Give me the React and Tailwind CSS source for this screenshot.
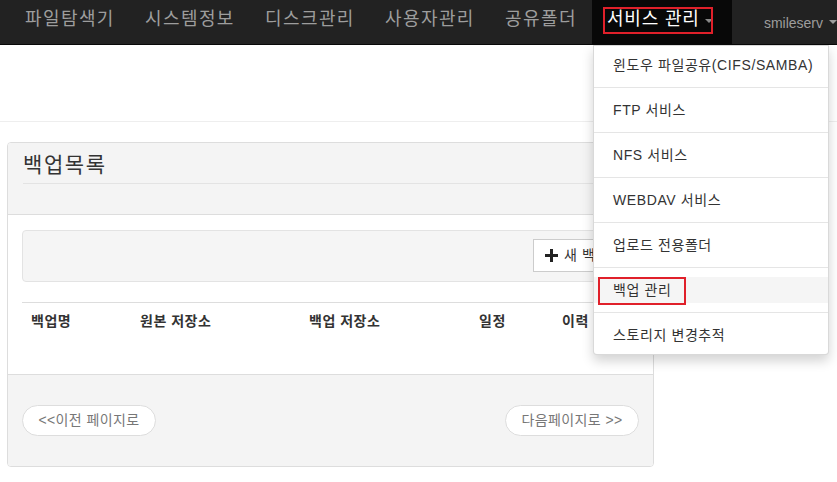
const font = { fontFamily: '"Liberation Sans", "Noto Sans CJK KR", sans-serif' };

const navItems = [
  { label: "파일탐색기", w: "w-[120px]" },
  { label: "시스템정보", w: "w-[120px]" },
  { label: "디스크관리", w: "w-[120px]" },
  { label: "사용자관리", w: "w-[120px]" },
  { label: "공유폴더", w: "w-[103px]" },
];

const menuItems = [
  "윈도우 파일공유(CIFS/SAMBA)",
  "FTP 서비스",
  "NFS 서비스",
  "WEBDAV 서비스",
  "업로드 전용폴더",
  "백업 관리",
  "스토리지 변경추적",
];

function Caret({ className }) {
  return <span className={"inline-block w-0 h-0 border-t-[4px] border-x-[4px] border-x-transparent " + className} />;
}

function Dropdown() {
  return (
    <div className="absolute top-[45px] left-[1px] w-[236px] bg-white border border-black/15 rounded-b shadow-[0_6px_12px_rgba(0,0,0,0.175)] z-20">
      {menuItems.map((item, i) => (
        <div key={item}>
          {i > 0 && <div className="h-px bg-[#e5e5e5]" />}
          <div className={i === 0 ? "pt-[6px] pb-[9px]" : i === menuItems.length - 1 ? "pt-[9px] pb-[6px]" : "py-[9px]"}>
            <div className={"relative h-[26px] flex items-center pl-[19px] text-[14px] tracking-[0.6px] text-[#333] " + (item === "백업 관리" ? "bg-[#f5f5f5]" : "")}>
              {item}
              {item === "백업 관리" && (
                <span className="absolute left-[4px] top-0 w-[88px] h-[28px] border-2 border-[#e0202a]" />
              )}
            </div>
          </div>
        </div>
      ))}
    </div>
  );
}

export default function App() {
  return (
    <div className="w-[837px] h-[482px] bg-white overflow-hidden" style={font}>
      <nav className="h-[45px] bg-[#222] border-b border-[#080808] flex pl-[9px]">
        {navItems.map((n) => (
          <div key={n.label} className={"h-[44px] pl-4 pt-[7px] text-[18px] tracking-[1.4px] leading-[24px] text-[#9d9d9d] whitespace-nowrap " + n.w}>
            {n.label}
          </div>
        ))}
        <div className="relative h-[44px] w-[140px] bg-[#080808] pl-[15px] pt-[7px] flex items-start">
          <span className="text-[18px] tracking-[0.8px] leading-[24px] text-white whitespace-nowrap">서비스 관리</span>
          <Caret className="border-t-[#888] ml-[5px] mt-[12px] border-t-[3px] border-x-[3px]" />
          <span className="absolute left-[11px] top-[7px] w-[110px] h-[27px] border-2 border-[#e0202a]" />
          <Dropdown />
        </div>
        <div className="flex-1" />
        <div className="h-[44px] flex items-center pl-[15px] text-[14px] text-[#9d9d9d]">
          <span className="leading-[20px] pt-[1px]">smileserv</span>
          <Caret className="border-t-[#9d9d9d] ml-[6px]" />
        </div>
      </nav>

      <div className="h-[77px] border-b border-[#eee]" />

      <div className="mt-[20px] ml-[7px] w-[647px] border border-[#ddd] rounded overflow-hidden">
        <div className="bg-[#f4f4f4] px-[15px] pt-[7px] pb-[30px] border-b border-[#ddd]">
          <h3 className="text-[21px] tracking-[1.6px] leading-[30px] text-[#333] pb-[3px] border-b border-[#e3e3e3]">백업목록</h3>
        </div>

        <div className="bg-white px-[14px] pt-[15px] pb-[35px]">
          <div className="h-[52px] bg-[#f5f5f5] border border-[#e3e3e3] rounded flex items-start pt-[8px] pl-[510px]">
            <button className="h-[33px] px-[11px] bg-white border border-[#ccc] flex items-center gap-[6px] text-[14px] tracking-[0.6px] text-[#333] whitespace-nowrap">
              <svg width="13" height="13" viewBox="0 0 13 13" className="text-[#222]">
                <path d="M5 0h3v5h5v3H8v5H5V8H0V5h5z" fill="currentColor" />
              </svg>
              새 백업
            </button>
          </div>

          <div className="mt-[20px] border-t border-[#ddd] grid grid-cols-[109px_169px_170px_83px_1fr] h-[37px] items-center text-[14px] tracking-[0.5px] font-bold text-[#333]">
            <div className="pl-[9px]">백업명</div>
            <div className="pl-[9px]">원본 저장소</div>
            <div className="pl-[9px]">백업 저장소</div>
            <div className="pl-[9px]">일정</div>
            <div className="pl-[9px]">이력</div>
          </div>
        </div>

        <div className="bg-[#f4f4f4] border-t border-[#ddd] px-[14px] py-[30px] flex justify-between">
          <button className="w-[134px] h-[31px] rounded-full bg-white border border-[#ddd] text-[14px] tracking-[0.4px] text-[#777]">
            &lt;&lt;이전 페이지로
          </button>
          <button className="w-[134px] h-[31px] rounded-full bg-white border border-[#ddd] text-[14px] tracking-[0.4px] text-[#777]">
            다음페이지로 &gt;&gt;
          </button>
        </div>
      </div>
    </div>
  );
}
